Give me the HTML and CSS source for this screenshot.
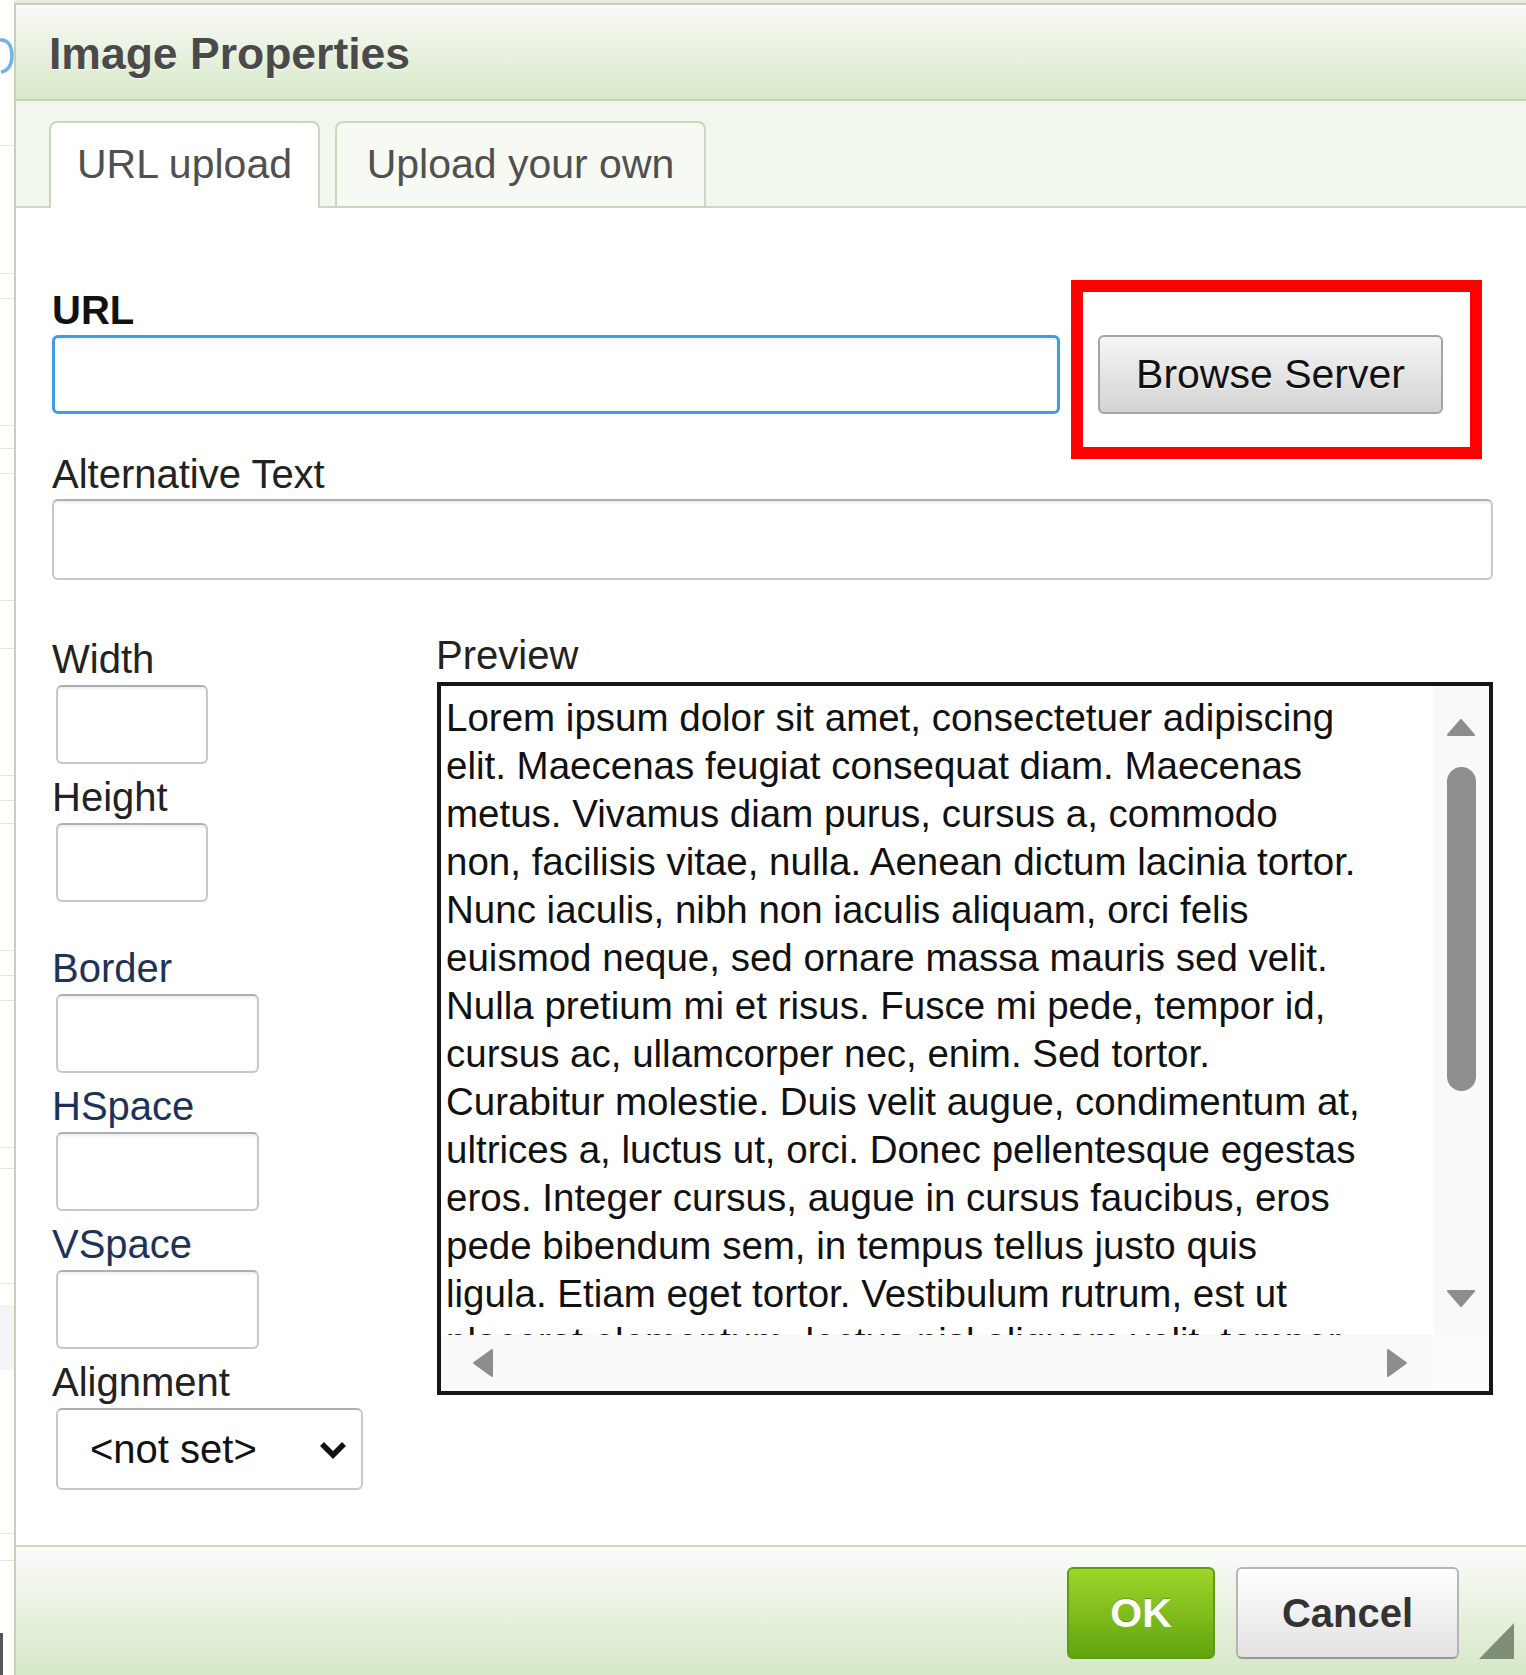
FILE: index.html
```html
<!DOCTYPE html>
<html lang="en">
<head>
    <meta charset="UTF-8">
    <meta name="viewport" content="width=device-width, initial-scale=1.0">
    <title>Image Properties</title>
    <link rel="stylesheet" href="styles.css">
</head>
<body>
    <div class="page">
        <!-- sliver of the editor page behind the dialog -->
        <div class="page-edge">
            <svg width="14" height="1675" viewBox="0 0 14 1675">
                <path d="M0 40 Q11 39 12 55 Q12 70 1 72" fill="none" stroke="#74b2e3" stroke-width="3.5"/>
                <rect x="0" y="1305" width="14" height="65" fill="#f4f4f4"/>
                <g stroke="#e3e3e3" stroke-width="1">
                    <line x1="0" y1="145.5" x2="14" y2="145.5"/>
                    <line x1="0" y1="273.5" x2="14" y2="273.5"/>
                    <line x1="0" y1="298.5" x2="14" y2="298.5"/>
                    <line x1="0" y1="425.5" x2="14" y2="425.5"/>
                    <line x1="0" y1="448.5" x2="14" y2="448.5"/>
                    <line x1="0" y1="473.5" x2="14" y2="473.5"/>
                    <line x1="0" y1="600.5" x2="14" y2="600.5"/>
                    <line x1="0" y1="648.5" x2="14" y2="648.5"/>
                    <line x1="0" y1="775.5" x2="14" y2="775.5"/>
                    <line x1="0" y1="800.5" x2="14" y2="800.5"/>
                    <line x1="0" y1="823.5" x2="14" y2="823.5"/>
                    <line x1="0" y1="950.5" x2="14" y2="950.5"/>
                    <line x1="0" y1="975.5" x2="14" y2="975.5"/>
                    <line x1="0" y1="1000.5" x2="14" y2="1000.5"/>
                    <line x1="0" y1="1147.5" x2="14" y2="1147.5"/>
                    <line x1="0" y1="1168.5" x2="14" y2="1168.5"/>
                    <line x1="0" y1="1283.5" x2="14" y2="1283.5"/>
                    <line x1="0" y1="1533.5" x2="14" y2="1533.5"/>
                    <line x1="0" y1="1560.5" x2="14" y2="1560.5"/>
                </g>
                <rect x="0" y="1633" width="3" height="42" fill="#555"/>
            </svg>
        </div>

        <div class="dialog">
            <div class="dialog-title">Image Properties</div>

            <div class="tabs">
                <div class="tab tab-url active">URL upload</div>
                <div class="tab tab-upload">Upload your own</div>
            </div>

            <div class="dialog-body">
                <div class="url-row">
                    <label class="field-label strong" for="url">URL</label>
                    <input id="url" class="text-input focused" type="text">
                    <div class="browse-cell">
                        <button class="browse-btn" type="button">Browse Server</button>
                        <span class="highlight"></span>
                    </div>
                </div>

                <label class="field-label alt-label" for="alt">Alternative Text</label>
                <input id="alt" class="text-input alt-input" type="text">

                <div class="layout-row">
                    <div class="dims">
                        <label class="field-label" for="width">Width</label>
                        <input id="width" class="text-input small" type="text">
                        <label class="field-label" for="height">Height</label>
                        <input id="height" class="text-input small" type="text">

                        <div class="spacing">
                            <label class="field-label accent" for="border">Border</label>
                            <input id="border" class="text-input medium" type="text">
                            <label class="field-label accent" for="hspace">HSpace</label>
                            <input id="hspace" class="text-input medium" type="text">
                            <label class="field-label accent" for="vspace">VSpace</label>
                            <input id="vspace" class="text-input medium" type="text">
                            <label class="field-label" for="align">Alignment</label>
                            <div class="select-wrap">
                                <select id="align">
                                    <option>&lt;not set&gt;</option>
                                    <option>Left</option>
                                    <option>Right</option>
                                </select>
                                <svg width="32" height="21" viewBox="0 0 32 21">
                                    <polyline points="5,5 16,16 27,5" fill="none" stroke="#111" stroke-width="5.5"/>
                                </svg>
                            </div>
                        </div>
                    </div>

                    <div class="preview-col">
                        <div class="field-label">Preview</div>
                        <div class="preview-box">
                            <div class="preview-text">
                                Lorem ipsum dolor sit amet, consectetuer adipiscing<br>
                                elit. Maecenas feugiat consequat diam. Maecenas<br>
                                metus. Vivamus diam purus, cursus a, commodo<br>
                                non, facilisis vitae, nulla. Aenean dictum lacinia tortor.<br>
                                Nunc iaculis, nibh non iaculis aliquam, orci felis<br>
                                euismod neque, sed ornare massa mauris sed velit.<br>
                                Nulla pretium mi et risus. Fusce mi pede, tempor id,<br>
                                cursus ac, ullamcorper nec, enim. Sed tortor.<br>
                                Curabitur molestie. Duis velit augue, condimentum at,<br>
                                ultrices a, luctus ut, orci. Donec pellentesque egestas<br>
                                eros. Integer cursus, augue in cursus faucibus, eros<br>
                                pede bibendum sem, in tempus tellus justo quis<br>
                                ligula. Etiam eget tortor. Vestibulum rutrum, est ut<br>
                                placerat elementum, lectus nisl aliquam velit, tempor<br>
                                aliquam eros nunc nonummy metus.
                            </div>
                            <div class="vscroll">
                                <svg class="arrow-up" width="30" height="19" viewBox="0 0 30 19">
                                    <polygon points="15,2 28,17 2,17" fill="#8d8d8d" stroke="#8d8d8d" stroke-width="2" stroke-linejoin="round"/>
                                </svg>
                                <div class="thumb"></div>
                                <svg class="arrow-down" width="30" height="19" viewBox="0 0 30 19">
                                    <polygon points="2,2 28,2 15,17" fill="#8d8d8d" stroke="#8d8d8d" stroke-width="2" stroke-linejoin="round"/>
                                </svg>
                            </div>
                            <div class="hscroll">
                                <svg width="23" height="30" viewBox="0 0 23 30">
                                    <polygon points="21,2 21,28 3,15" fill="#8d8d8d" stroke="#8d8d8d" stroke-width="2" stroke-linejoin="round"/>
                                </svg>
                                <svg width="23" height="30" viewBox="0 0 23 30">
                                    <polygon points="2,2 20,15 2,28" fill="#8d8d8d" stroke="#8d8d8d" stroke-width="2" stroke-linejoin="round"/>
                                </svg>
                            </div>
                            <div class="corner"></div>
                        </div>
                    </div>
                </div>
            </div>

            <div class="dialog-footer">
                <button class="btn btn-ok" type="button">OK</button>
                <button class="btn btn-cancel" type="button">Cancel</button>
                <span class="resizer"></span>
            </div>
        </div>
    </div>
</body>
</html>
```

FILE: styles.css
```css
* {
    box-sizing: border-box;
}
body {
    margin: 0;
    background: #fff;
    font-family: "Liberation Sans", Arial, sans-serif;
    color: #222;
    overflow: hidden;
}
.page {
    display: flex;
    height: 1675px;
}
.page-edge {
    flex: 0 0 14px;
}
.page-edge svg {
    display: block;
}

/* dialog frame */
.dialog {
    flex: 1;
    display: flex;
    flex-direction: column;
    margin-top: 3px;
    border-top: 2px solid #c5d2b9;
    border-left: 2px solid #c4d3b5;
    box-shadow: 0 -3px 0 #e8eae6;
    background: #fff;
}
.dialog-title {
    flex: 0 0 96px;
    padding: 4px 0 0 33px;
    line-height: 90px;
    font-size: 44.5px;
    font-weight: bold;
    color: #4a4a4a;
    text-shadow: 0 1px 0 #fff;
    background: linear-gradient(#f9fbf7, #d8e9c9);
    border-bottom: 2px solid #c3d3b4;
}

/* tabs */
.tabs {
    flex: 0 0 107px;
    display: flex;
    align-items: flex-end;
    gap: 15px;
    padding-left: 33px;
    background: #f1f7ec;
    border-bottom: 2px solid #c9d8bc;
}
.tab {
    height: 85px;
    padding-top: 17px;
    line-height: 48px;
    font-size: 41px;
    color: #505050;
    text-align: center;
    background: #f6faf3;
    border: 2px solid #c9d8bc;
    border-bottom: none;
    border-radius: 8px 8px 0 0;
}
.tab.active {
    height: 87px;
    margin-bottom: -2px;
    background: #fff;
}
.tab-url {
    width: 271px;
}
.tab-upload {
    width: 371px;
}

/* body */
.dialog-body {
    flex: 1;
    padding: 79px 33px 0 36px;
}
.field-label {
    display: block;
    font-size: 40px;
    line-height: 46px;
    color: #222;
}
.field-label.strong {
    font-weight: bold;
    color: #111;
}
.field-label.accent {
    color: #1d3258;
}
.url-row {
    display: grid;
    grid-template-columns: 1fr 395px;
    column-gap: 38px;
    row-gap: 2px;
}
.url-row .field-label {
    grid-column: 1 / -1;
}
.url-row .text-input {
    grid-column: 1;
}
.url-row .browse-cell {
    grid-column: 2;
}
.text-input {
    display: block;
    width: 100%;
    height: 79px;
    padding: 0 12px;
    font: 40px "Liberation Sans", Arial, sans-serif;
    background: #fff;
    border: 2px solid #c6c8cc;
    border-top-color: #acb0b6;
    border-radius: 6px;
    box-shadow: inset 0 2px 3px rgba(0, 0, 0, 0.07);
}
.text-input.focused {
    border: 3px solid #3c9de8;
    box-shadow: inset 0 2px 3px rgba(0, 0, 0, 0.05);
}
.browse-cell {
    position: relative;
}
.browse-btn {
    display: block;
    width: 345px;
    height: 79px;
    padding: 0;
    font: 41px "Liberation Sans", Arial, sans-serif;
    color: #111;
    text-shadow: 0 1px 0 #fff;
    background: linear-gradient(#f6f6f6, #d3d3d3);
    border: 2px solid #a4a4a4;
    border-radius: 6px;
}
.highlight {
    position: absolute;
    top: -55px;
    left: -27px;
    width: 411px;
    height: 179px;
    border: 12px solid #ff0000;
}
.alt-label {
    margin-top: 37px;
    margin-bottom: 2px;
}
.alt-input {
    height: 81px;
}

.layout-row {
    display: grid;
    grid-template-columns: 384px 1fr;
    margin-top: 56px;
}
.dims .text-input {
    margin: 3px 0 10px 4px;
}
.dims .small {
    width: 152px;
}
.dims .medium {
    width: 203px;
}
.spacing {
    margin-top: 43px;
}
.select-wrap {
    position: relative;
    width: 307px;
    margin: 3px 0 0 4px;
}
.select-wrap select {
    appearance: none;
    -webkit-appearance: none;
    display: block;
    width: 100%;
    height: 82px;
    padding-left: 32px;
    font: 40px "Liberation Sans", Arial, sans-serif;
    color: #111;
    background: #fff;
    border: 2px solid #c6c8cc;
    border-top-color: #acb0b6;
    border-radius: 6px;
}
.select-wrap svg {
    position: absolute;
    right: 14px;
    top: 31px;
    pointer-events: none;
}

/* preview pane */
.preview-col {
    margin-top: -4px;
}
.preview-box {
    display: grid;
    grid-template-columns: minmax(0, 1fr) 56px;
    grid-template-rows: minmax(0, 1fr) 56px;
    height: 713px;
    margin: 4px 0 0 1px;
    background: #fff;
    border: 4px solid #161616;
}
.preview-text {
    min-height: 0;
    overflow: hidden;
    padding: 8px 0 0 5px;
    font-size: 38.5px;
    line-height: 48px;
    white-space: nowrap;
    color: #111;
}
.vscroll {
    display: flex;
    flex-direction: column;
    align-items: center;
    background: #f9f9f9;
}
.arrow-up {
    margin-top: 32px;
}
.thumb {
    width: 29px;
    height: 324px;
    margin-top: 30px;
    border-radius: 15px;
    background: #8e8e8e;
}
.arrow-down {
    margin-top: auto;
    margin-bottom: 27px;
}
.hscroll {
    display: flex;
    align-items: center;
    justify-content: space-between;
    padding: 0 24px 0 30px;
    background: #f9f9f9;
}
.corner {
    background: #fcfcfc;
}

/* footer */
.dialog-footer {
    position: relative;
    flex: 0 0 130px;
    display: flex;
    justify-content: flex-end;
    align-items: flex-start;
    gap: 21px;
    padding: 20px 67px 0 0;
    border-top: 2px solid #c9d9bc;
    background: linear-gradient(#fbfcfa, #d6e7c7);
}
.btn {
    height: 92px;
    padding: 0;
    font: bold 41px "Liberation Sans", Arial, sans-serif;
    border-radius: 6px;
}
.btn-ok {
    width: 148px;
    color: #fff;
    text-shadow: 0 -1px 0 rgba(0, 0, 0, 0.25);
    background: linear-gradient(#9fd52b, #62a40e);
    border: 2px solid #5d9d13;
}
.btn-cancel {
    width: 223px;
    font-size: 40px;
    color: #333;
    background: linear-gradient(#fff, #e2e2e2);
    border: 2px solid #b5b5b5;
    border-bottom-color: #9a9a9a;
}
.resizer {
    position: absolute;
    right: 12px;
    top: 76px;
    width: 35px;
    height: 36px;
    background: #7e8e76;
    clip-path: polygon(100% 0, 100% 100%, 0 100%);
}
```
